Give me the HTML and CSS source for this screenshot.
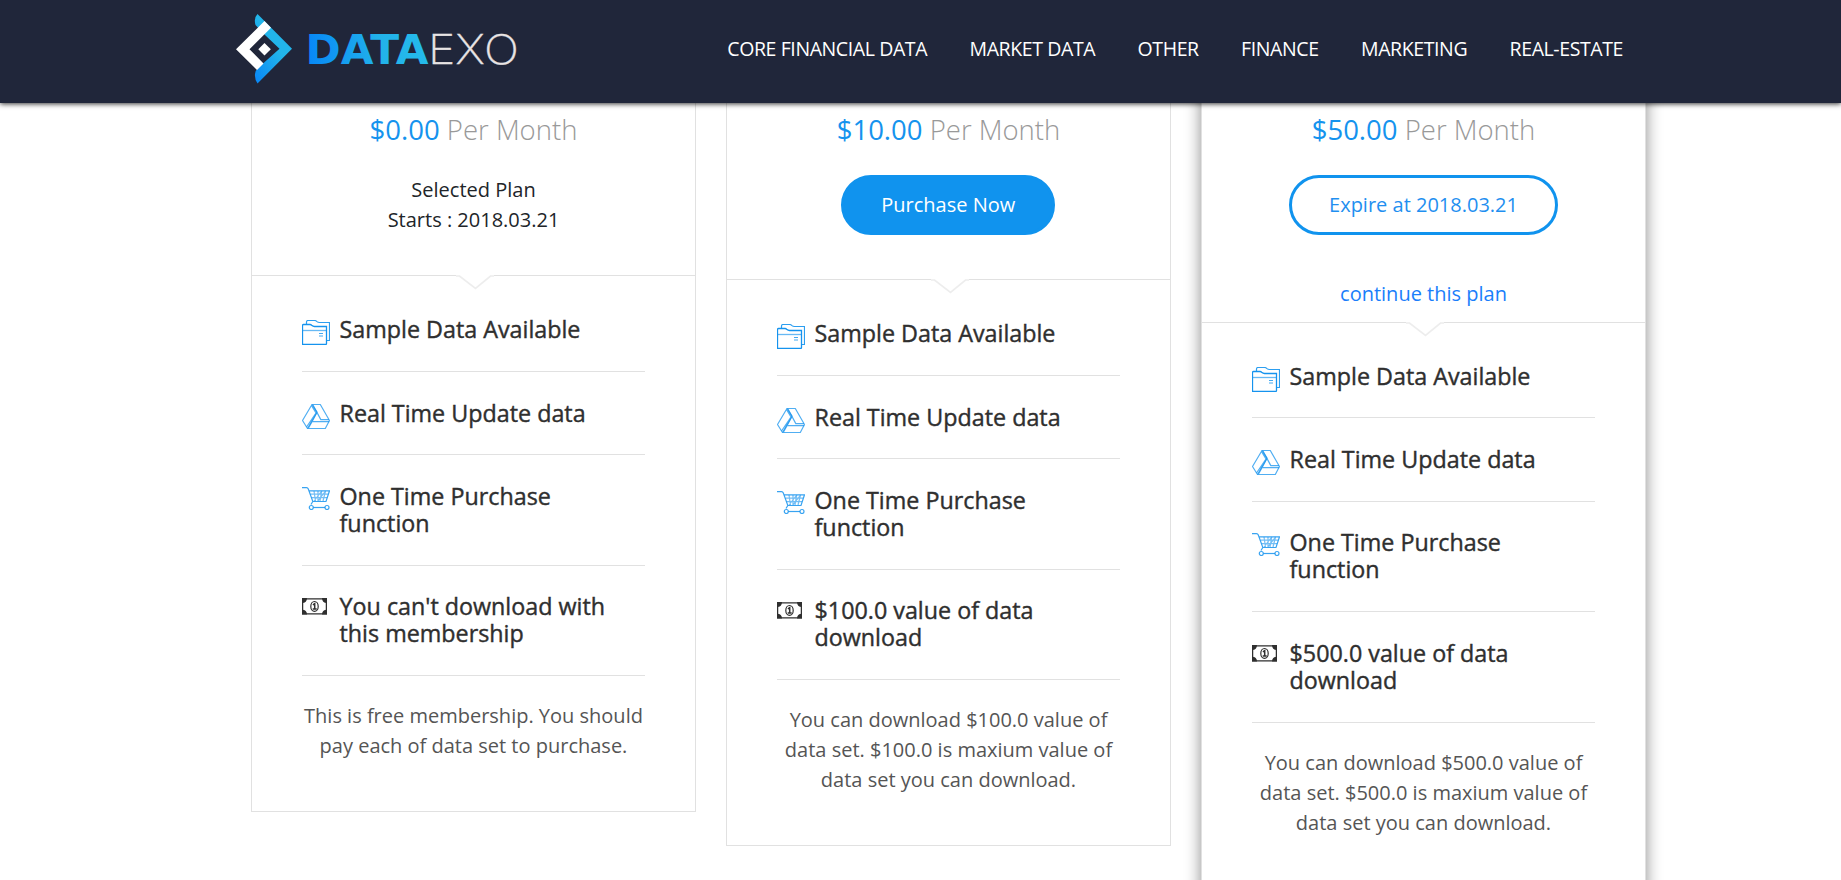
FILE: index.html
```html
<!DOCTYPE html>
<html lang="en">
<head>
<meta charset="utf-8">
<title>DataExo - Membership</title>
<link rel="stylesheet" href="styles.css">
</head>
<body>
<svg class="sprite" width="0" height="0" aria-hidden="true">
  <symbol id="folder" viewBox="0 0 28 25">
    <g fill="none" stroke="#1593ee">
      <path d="M4.5 4V1.9Q4.5.5 6 .5H12.5Q14 .5 15 1.6Q16 2.5 17.5 2.5H27.5V20.5H24.5" stroke-opacity=".9" stroke-width="1.200"/>
      <path d="M.5 24.5V5.5Q.5 4.5 1.5 4.5H8Q9 4.5 10 5.6Q11 6.5 12.5 6.5H24.5V23.5Q24.5 24.5 23.5 24.5Z" stroke-width="1.300"/>
      <path d="M.5 10.5H24" stroke-opacity=".65" stroke-width="1.300"/>
      <path d="M17 13.500h4M17 16h4" stroke-opacity=".8"/>
    </g>
  </symbol>
  <symbol id="drive" viewBox="0 0 28 25">
    <g fill="none" stroke="#1593ee" stroke-opacity=".75" stroke-width="1.200" stroke-linejoin="round">
      <path d="M10 .5H18.300L27.500 16.500L23.300 24.500H5.500L.5 16.500Z"/>
      <path d="M10 .5L15 8.200L5.500 24.500M9.600 1.800L14 9L4.500 23"/>
      <path d="M11 1L18.800 15.600H27M15 8.200L10 17.600H27.200M10 17.600L6.500 24"/>
    </g>
  </symbol>
  <symbol id="cart" viewBox="0 0 28 23">
    <g fill="none" stroke="#1593ee" stroke-opacity=".85" stroke-width="1.200">
      <path d="M0 .6H4.500Q5.800.6 6.300 2L10.800 14.500H24L27.500 3.800H7M10.800 14.500L9 17.500"/>
      <path d="M8.500 7.200H26M9.700 10.700H25M12 4L13.500 14M16 4V14M19.700 4L18 14M23.500 4L21 14M12 14L19.700 4M16 14L23.500 4" stroke-opacity=".6"/>
      <path d="M11.300 20.500H23"/>
      <circle cx="9.300" cy="20.500" r="2"/><circle cx="25" cy="20.500" r="2"/>
    </g>
  </symbol>
  <symbol id="money" viewBox="0 0 25 17">
    <path d="M.6 .9H24.400V15.900H.6Z" fill="none" stroke="#2f2f2f" stroke-width="1.300"/>
    <path d="M0 0H5Q5 5 0 5ZM25 0H20Q20 5 25 5ZM0 16.500V11.700Q5 11.700 5 16.500ZM25 16.500V11.700Q20 11.700 20 16.500Z" fill="#2f2f2f"/>
    <ellipse cx="12.500" cy="8.400" rx="3.700" ry="4.900" fill="#fff" stroke="#2f2f2f" stroke-width="1.200"/>
    <path d="M10.900 6.800L12.700 5.600V11M10.700 11H14.700" fill="none" stroke="#2f2f2f" stroke-width="1.500"/>
  </symbol>
  <symbol id="notch" viewBox="0 0 38 15">
    <path d="M0 0H38V1.500H35L19.500 13.500L3 1.500H0Z" fill="#fff"/>
    <path d="M0 1H3.500L19.500 13.300L34.500 1H38" fill="none" stroke="#ededed" stroke-width="1.700"/>
  </symbol>
</svg>

<header class="topbar">
  <a class="brand" href="#">
    <svg width="282" height="72" viewBox="0 0 282 72">
      <defs>
        <linearGradient id="wordFill" x1="0" x2="1"><stop offset="0" stop-color="#0687f6"/><stop offset=".6" stop-color="#22b2ea"/><stop offset="1" stop-color="#25bbea"/></linearGradient>
        <linearGradient id="markFill" x1="0" y1="1" x2=".5" y2=".4"><stop offset="0" stop-color="#0785f7"/><stop offset="1" stop-color="#22b5ea"/></linearGradient>
      </defs>
      <path d="M21.500 0L56 34.700L21.500 69.500Q18.500 65 19 60Q19.300 56.500 22 54L43.500 34.700L29 21L19.500 11Q17.500 4 21.500 0Z" fill="url(#markFill)"/>
      <path d="M28.500 7L0 35.200L21 56L27.500 49.500L13.500 35.200L35 13.700Z" fill="#fff"/>
      <path d="M28.500 29L34.800 35.200L28.500 41.500L22.300 35.200Z" fill="#fff"/>
      <text class="word-bold" x="69.500" y="49.500" textLength="123" lengthAdjust="spacingAndGlyphs" fill="url(#wordFill)">DATA</text>
      <text class="word-thin" x="192" y="49.500" textLength="91" lengthAdjust="spacingAndGlyphs">EXO</text>
    </svg>
  </a>
  <nav class="menu">
    <a href="#">CORE FINANCIAL DATA</a>
    <a href="#">MARKET DATA</a>
    <a href="#">OTHER</a>
    <a href="#">FINANCE</a>
    <a href="#">MARKETING</a>
    <a href="#">REAL-ESTATE</a>
  </nav>
</header>

<main class="plans">
  <section class="plan">
    <div class="plan-head">
      <div class="price">$0.00 <span>Per Month</span></div>
      <p class="status">Selected Plan<br>Starts : 2018.03.21</p>
      <svg class="notch"><use href="#notch"/></svg>
    </div>
    <ul class="features">
      <li><svg class="icon-folder"><use href="#folder"/></svg><span>Sample Data Available</span></li>
      <li><svg class="icon-drive"><use href="#drive"/></svg><span>Real Time Update data</span></li>
      <li><svg class="icon-cart"><use href="#cart"/></svg><span>One Time Purchase<br>function</span></li>
      <li><svg class="icon-money"><use href="#money"/></svg><span>You can't download with<br>this membership</span></li>
    </ul>
    <p class="note">This is free membership. You should<br>pay each of data set to purchase.</p>
  </section>

  <section class="plan">
    <div class="plan-head">
      <div class="price">$10.00 <span>Per Month</span></div>
      <a class="btn btn-fill" href="#">Purchase Now</a>
      <svg class="notch"><use href="#notch"/></svg>
    </div>
    <ul class="features">
      <li><svg class="icon-folder"><use href="#folder"/></svg><span>Sample Data Available</span></li>
      <li><svg class="icon-drive"><use href="#drive"/></svg><span>Real Time Update data</span></li>
      <li><svg class="icon-cart"><use href="#cart"/></svg><span>One Time Purchase<br>function</span></li>
      <li><svg class="icon-money"><use href="#money"/></svg><span>$100.0 value of data<br>download</span></li>
    </ul>
    <p class="note">You can download $100.0 value of<br>data set. $100.0 is maxium value of<br>data set you can download.</p>
  </section>

  <section class="plan plan-active">
    <div class="plan-head">
      <div class="price">$50.00 <span>Per Month</span></div>
      <a class="btn btn-line" href="#">Expire at 2018.03.21</a>
      <a class="continue" href="#">continue this plan</a>
      <svg class="notch"><use href="#notch"/></svg>
    </div>
    <ul class="features">
      <li><svg class="icon-folder"><use href="#folder"/></svg><span>Sample Data Available</span></li>
      <li><svg class="icon-drive"><use href="#drive"/></svg><span>Real Time Update data</span></li>
      <li><svg class="icon-cart"><use href="#cart"/></svg><span>One Time Purchase<br>function</span></li>
      <li><svg class="icon-money"><use href="#money"/></svg><span>$500.0 value of data<br>download</span></li>
    </ul>
    <p class="note">You can download $500.0 value of<br>data set. $500.0 is maxium value of<br>data set you can download.</p>
  </section>
</main>
</body>
</html>
```
FILE: styles.css
```css
* { box-sizing: border-box; }
html, body { height: 100%; }
body {
  margin: 0;
  overflow: hidden;
  background: #fff;
  color: #212529;
  font: 400 20px/30px "Open Sans", sans-serif;
}
a { text-decoration: none; }
.sprite { position: absolute; }

.topbar {
  position: relative;
  z-index: 2;
  display: flex;
  justify-content: space-between;
  align-items: center;
  height: 103px;
  padding: 0 218px 0 236px;
  background: #20263a;
  box-shadow: 0 1px 5px rgba(0, 0, 0, .8);
}
.brand { display: block; width: 282px; height: 72px; margin-bottom: 3px; }
.brand svg { display: block; overflow: visible; }
.word-bold { font: 700 41px "DejaVu Sans", sans-serif; }
.word-thin { font: 200 41px Inter, sans-serif; fill: #e8e4e4; stroke: #e8e4e4; stroke-width: .3px; }
.menu { display: flex; gap: 42.400px; margin-bottom: 6px; }
.menu a { color: #fff; font-size: 19.500px; letter-spacing: -.4px; white-space: nowrap; }

.plans {
  display: flex;
  align-items: flex-start;
  gap: 30px;
  margin-top: -24px;
  padding-left: 251px;
}
.plan {
  flex: none;
  width: 445px;
  padding-bottom: 50px;
  border: 1px solid #e1e1e1;
  background: #fff;
  text-align: center;
}
.plan-active { height: 840px; box-shadow: 0 0 15px rgba(0, 0, 0, .45); }
.plan-head {
  position: relative;
  display: flex;
  flex-direction: column;
  align-items: center;
  padding: 29px 0 40px;
  border-bottom: 1px solid #e1e1e1;
}
.plan:nth-child(2) .plan-head { padding-bottom: 44px; }
.plan.plan-active .plan-head { padding-bottom: 13px; }
.price { height: 41px; font-size: 27.500px; line-height: 42px; color: #1593ee; white-space: nowrap; }
.price span { color: #999; font-weight: 300; }
.status { margin: 25px 0 0; }
.btn {
  height: 60px;
  margin-top: 25px;
  border: 3px solid #1093ee;
  border-radius: 30px;
  line-height: 54px;
}
.btn-fill { width: 214px; margin-right: 2px; padding-left: 1.500px; background: #1093ee; color: #fff; }
.btn-line { width: 269px; color: #1f8ff0; }
.continue { margin-top: 44px; color: #1a7efb; }
.notch { position: absolute; left: 204px; bottom: -15px; width: 38px; height: 15px; }

.features {
  margin: 0 50px;
  padding: 12.500px 0 0;
  list-style: none;
  text-align: left;
}
.plan-active .features { padding-top: 12px; }
.features li {
  display: flex;
  align-items: flex-start;
  padding: 27.700px 0;
  border-bottom: 1px solid #e1e1e1;
  color: #2f2f2f;
  font-size: 23.300px;
  line-height: 27px;
  -webkit-text-stroke: .4px #2f2f2f;
}
.features span { white-space: nowrap; }
.features svg { flex: none; width: 28px; margin: 4px 9.500px 0 0; }
.features .icon-folder, .features .icon-drive { height: 25px; margin-bottom: -4px; }
.features .icon-cart { height: 23px; }
.features .icon-money { width: 25px; height: 17px; margin: 5px 12.500px 0 0; }

.note { margin: 25px 0 0; color: #555; white-space: nowrap; }
```
